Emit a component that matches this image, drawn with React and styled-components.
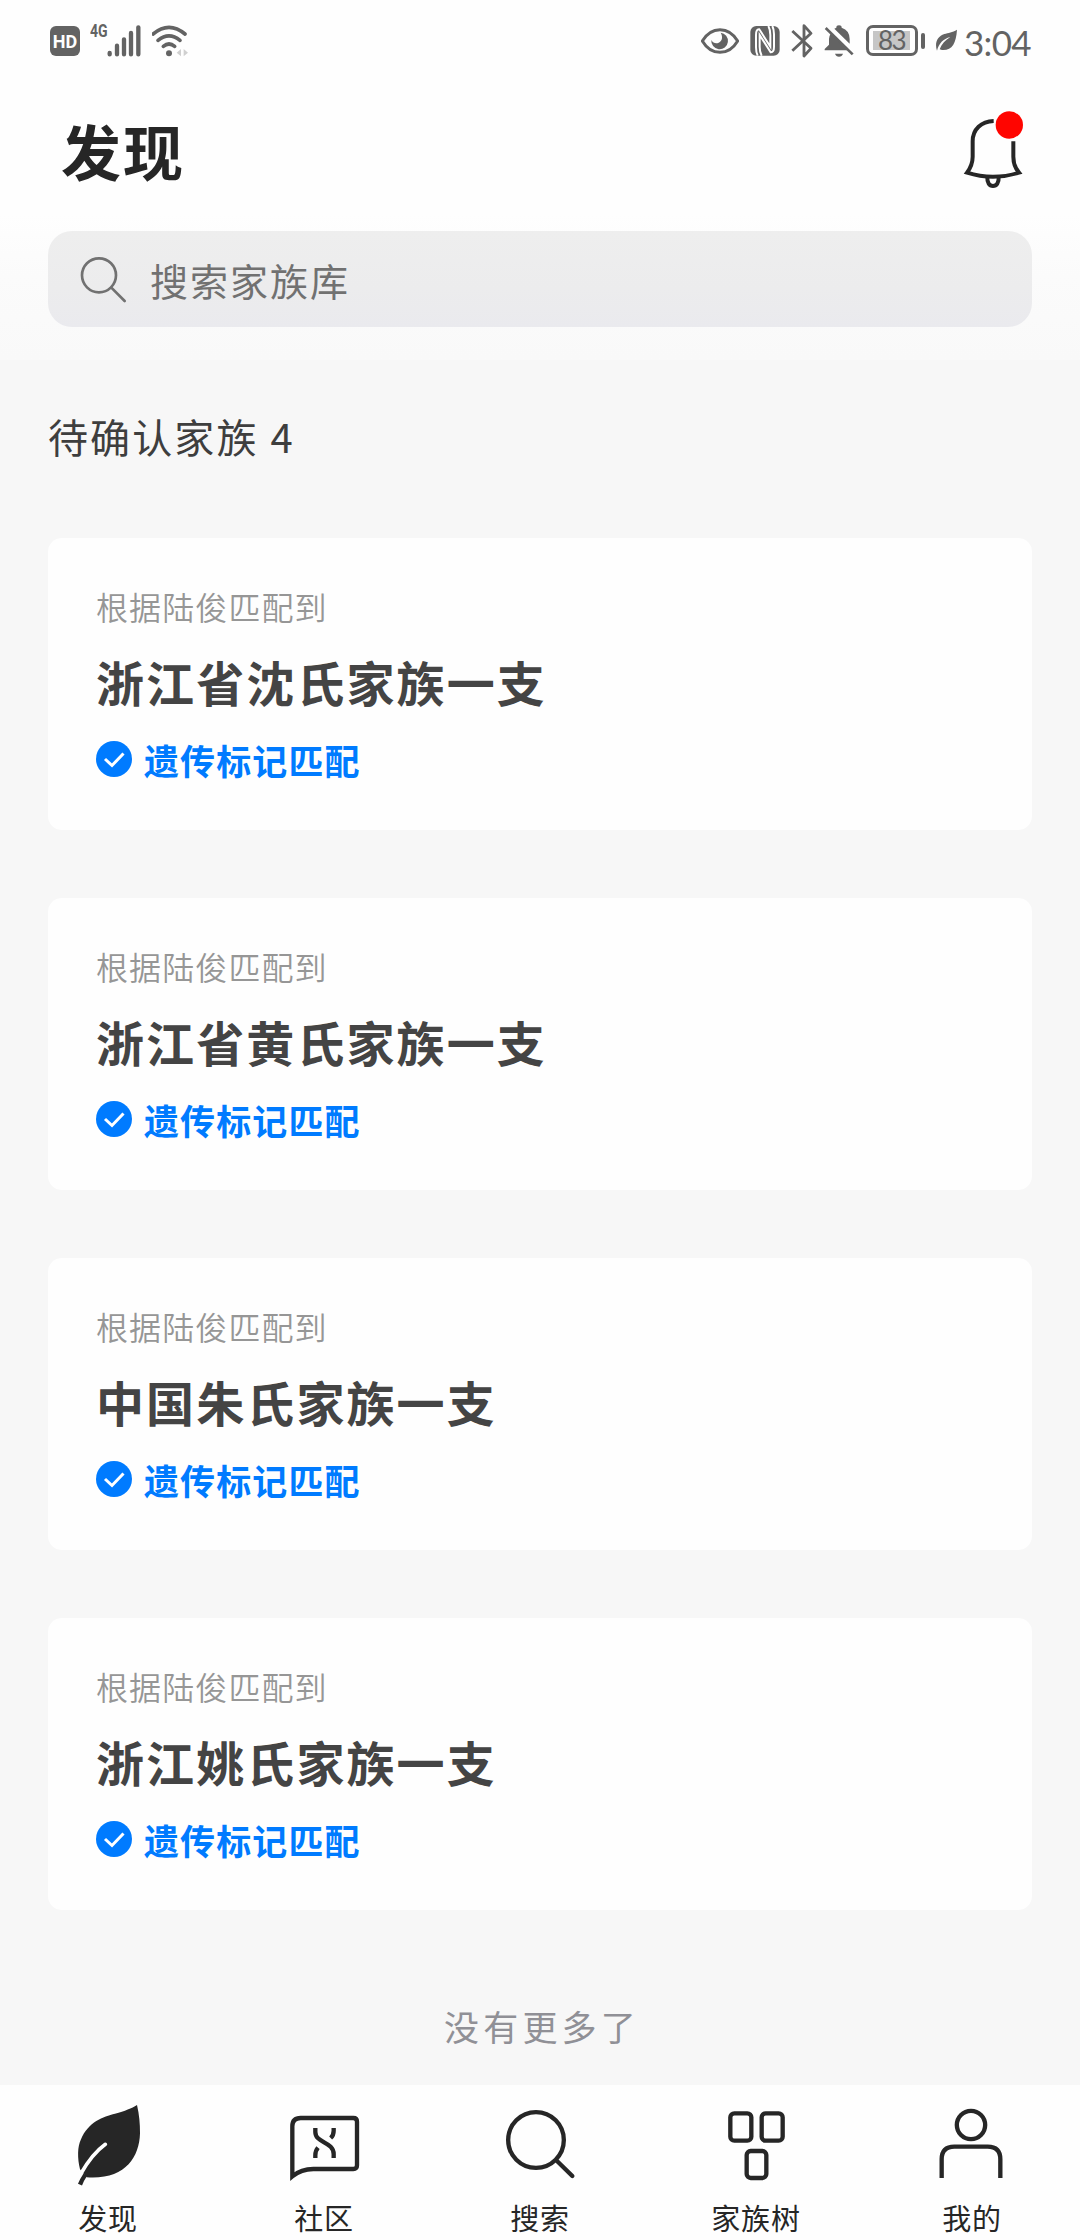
import React from 'react';
import styled, { createGlobalStyle } from 'styled-components';

const families = [
  { id: 1, source: '陆俊', name: '浙江省沈氏家族一支' },
  { id: 2, source: '陆俊', name: '浙江省黄氏家族一支' },
  { id: 3, source: '陆俊', name: '中国朱氏家族一支' },
  { id: 4, source: '陆俊', name: '浙江姚氏家族一支' },
];

const tabs = [
  { label: '发现', Icon: LeafIcon },
  { label: '社区', Icon: CommunityIcon },
  { label: '搜索', Icon: SearchTabIcon },
  { label: '家族树', Icon: TreeIcon },
  { label: '我的', Icon: ProfileIcon },
];

function App() {
  return (
    <>
      <GlobalStyle />
      <Page>
        <StatusBar />
        <Header>
          <TitleRow>
            <h1>发现</h1>
            <BellIcon />
          </TitleRow>
          <SearchBox>
            <SearchIcon />
            <span>搜索家族库</span>
          </SearchBox>
        </Header>
        <Content>
          <SectionTitle>待确认家族 {families.length}</SectionTitle>
          <CardList>
            {families.map((family) => (
              <FamilyCard key={family.id} {...family} />
            ))}
          </CardList>
          <EndText>没有更多了</EndText>
        </Content>
        <TabBar>
          {tabs.map(({ label, Icon }) => (
            <Tab key={label}>
              <Icon />
              <span>{label}</span>
            </Tab>
          ))}
        </TabBar>
      </Page>
    </>
  );
}

function FamilyCard({ source, name }) {
  return (
    <Card>
      <CardLabel>根据{source}匹配到</CardLabel>
      <CardName>{name}</CardName>
      <Match>
        <CheckIcon />
        <span>遗传标记匹配</span>
      </Match>
    </Card>
  );
}

function StatusBar() {
  return (
    <StatusBarStyled>
      <StatusGroup>
        <HdBadge>HD</HdBadge>
        <Network>4G</Network>
        <SignalIcon />
        <WifiIcon />
      </StatusGroup>
      <StatusGroup>
        <EyeIcon />
        <NfcIcon />
        <BluetoothIcon />
        <MutedIcon />
        <Battery>
          <BatteryBody>
            <span>83</span>
          </BatteryBody>
          <BatteryTip />
        </Battery>
        <SaverIcon />
        <Time>3:04</Time>
      </StatusGroup>
    </StatusBarStyled>
  );
}

/* status bar icons */

function SignalIcon() {
  return (
    <svg width="34" height="32" viewBox="231 42 102 96">
      <g stroke="#636363" strokeWidth="13" strokeLinecap="round">
        <path d="M239 126v4M261 104v26M282 85v45M303 66v64M325 49v81" />
      </g>
    </svg>
  );
}

function WifiIcon() {
  return (
    <svg width="38" height="32" viewBox="363 42 114 96">
      <g fill="none" stroke="#636363" strokeWidth="11" strokeLinecap="round">
        <path d="M366 69Q414 29 462 69" />
        <path d="M381 88Q414 61 447 88" />
        <path d="M397 106Q414 92 431 106" />
      </g>
      <circle cx="414" cy="127" r="9" fill="#636363" />
      <path d="M450 114v22l-13-11zM458 114v22l13-11z" fill="#d0d0d0" />
    </svg>
  );
}

function EyeIcon() {
  return (
    <svg width="38" height="32" viewBox="63 42 114 96">
      <path
        d="M67 90C80 68 98 56 120 56s40 12 53 34c-13 22-31 34-53 34s-40-12-53-34z"
        fill="none"
        stroke="#636363"
        strokeWidth="9"
      />
      <path
        d="M122 65a25 25 0 1 1-28 22c5 9 14 12 22 8 11-5 13-18 6-30z"
        fill="#636363"
      />
    </svg>
  );
}

function NfcIcon() {
  return (
    <svg width="30" height="32" viewBox="212 42 90 96">
      <rect x="213" y="45" width="88" height="89" rx="18" fill="#636363" />
      <path
        d="M235 134q-5-10-5-25V72q0-18 10-17l33 52V72q0-16-6-27M279 45q5 10 5 25v37q0 18-10 17l-33-52v35q0 16 6 27"
        fill="none"
        stroke="#fff"
        strokeWidth="6"
      />
    </svg>
  );
}

function BluetoothIcon() {
  return (
    <svg width="22" height="36" viewBox="333 36 66 108">
      <path
        d="M337 60l56 52-21 23V44l21 23-56 52"
        fill="none"
        stroke="#636363"
        strokeWidth="8.5"
        strokeLinejoin="round"
      />
    </svg>
  );
}

function MutedIcon() {
  return (
    <svg width="30" height="34" viewBox="433 39 90 102">
      <path
        d="M453 68l53 50H435v-4l13-13V84q0-9 5-16zM464 53l6-3q0-7 8-7t8 7q24 8 24 34v14z"
        fill="#636363"
      />
      <path d="M438 51l81 79" stroke="#636363" strokeWidth="8" />
      <path d="M466 128h24q-3 9-12 9t-12-9z" fill="#636363" />
    </svg>
  );
}

function SaverIcon() {
  return (
    <svg width="22" height="24" viewBox="763 57 66 72">
      <path
        d="M829 59c-3 42-15 63-45 61l-7-2c6-17 17-28 32-37-22 6-34 19-40 41-8-24 1-43 22-50 12-4 24-4 38-13z"
        fill="#636363"
      />
    </svg>
  );
}

/* header icons */

function BellIcon() {
  return (
    <svg width="68" height="82" viewBox="120 55 204 246">
      <g fill="none" stroke="#262626" strokeWidth="12">
        <path d="M221 91C184 92 158 116 158 152v46c0 17-6 33-17 48 51 16 105 16 156 0-12-14-17-30-17-48v-46" />
        <path d="M202 259c-1 17 6 27 17 27s18-10 17-27" />
      </g>
      <circle cx="268" cy="103" r="41" fill="#ff0500" />
    </svg>
  );
}

function SearchIcon() {
  return (
    <svg width="48" height="48" viewBox="120 467 144 144">
      <g fill="none" stroke="#717171" strokeWidth="8" strokeLinecap="round">
        <circle cx="177" cy="528" r="51" />
        <path d="M214 565l40 40" />
      </g>
    </svg>
  );
}

function CheckIcon() {
  return (
    <svg width="36" height="36" viewBox="0 0 36 36">
      <circle cx="18" cy="18" r="18" fill="#007bff" />
      <path d="M9 18l7 6.5L27.5 12.5" fill="none" stroke="#fff" strokeWidth="3" />
    </svg>
  );
}

/* tab bar icons */

function LeafIcon() {
  return (
    <svg width="72" height="84" viewBox="96 60 216 252" overflow="visible">
      <path
        d="M291 75c7 30 9 55 9 85-2 75-47 140-160 132l-20-24c-8-33-8-68 3-90 22-53 67-68 102-77 30-8 50-16 66-26z"
        fill="#262626"
      />
      <path
        d="M196 193Q157 221 122 282"
        fill="none"
        stroke="#fff"
        strokeWidth="11"
        strokeLinecap="round"
      />
      <path d="M120 314q6-15 16-30" fill="none" stroke="#262626" strokeWidth="13" />
    </svg>
  );
}

function CommunityIcon() {
  return (
    <svg width="72" height="84" viewBox="744 60 216 252">
      <g fill="none" stroke="#262626" strokeWidth="13">
        <path d="M757 289V139q0-25 25-25h158q11 0 11 11v131q0 11-11 11H820q-36 0-63 22z" />
        <path d="M826 144v12c0 34 55 28 55 66v12M881 144v8q0 14-9 22M826 234v-8q0-14 8-23" />
      </g>
    </svg>
  );
}

function SearchTabIcon() {
  return (
    <svg width="72" height="84" viewBox="252 360 216 252">
      <g fill="none" stroke="#262626" strokeWidth="13" strokeLinecap="round">
        <circle cx="348" cy="480" r="83.5" />
        <path d="M411 543l46 45" />
      </g>
    </svg>
  );
}

function TreeIcon() {
  return (
    <svg width="72" height="84" viewBox="120 60 216 252">
      <g fill="none" stroke="#262626" strokeWidth="13">
        <rect x="151" y="100" width="63" height="82" rx="12" />
        <rect x="245" y="100" width="63" height="82" rx="12" />
        <rect x="200" y="213" width="59" height="81" rx="12" />
      </g>
    </svg>
  );
}

function ProfileIcon() {
  return (
    <svg width="72" height="84" viewBox="768 60 216 252">
      <g fill="none" stroke="#262626" strokeWidth="13">
        <circle cx="873" cy="135" r="42.5" />
        <path d="M785 294v-56q0-38 38-38h100q38 0 38 38v56" />
      </g>
    </svg>
  );
}

const GlobalStyle = createGlobalStyle`
  * {
    box-sizing: border-box;
  }
  body {
    margin: 0;
    font-family: 'Noto Sans CJK SC', sans-serif;
  }
  h1, h2, h3, p {
    margin: 0;
  }
  svg {
    display: block;
    flex-shrink: 0;
  }
`;

const Page = styled.div`
  display: flex;
  flex-direction: column;
  width: 1080px;
  height: 2240px;
  overflow: hidden;
  background: #f7f7f7;
`;

const StatusBarStyled = styled.div`
  display: flex;
  justify-content: space-between;
  height: 80px;
  padding: 0 50px;
  background: #fefefe;
  color: #636363;
`;

const StatusGroup = styled.div`
  display: flex;
  align-items: center;
  height: 81px;
  > svg + svg {
    margin-left: 11px;
  }
`;

const HdBadge = styled.div`
  width: 30px;
  height: 30px;
  border-radius: 6px;
  background: #636363;
  color: #fff;
  font: 700 18px/31px Roboto, sans-serif;
  text-align: center;
`;

const Network = styled.span`
  width: 17px;
  margin: 0 0 19px 10px;
  font: 700 18px/18px Roboto, sans-serif;
  transform: scaleX(0.78);
  transform-origin: left;
`;

const Battery = styled.div`
  display: flex;
  align-items: center;
  gap: 3px;
  margin: 0 10px 0 12px;
`;

const BatteryBody = styled.div`
  width: 52px;
  height: 31px;
  padding: 3px;
  border: 3px solid #636363;
  border-radius: 7px;
  span {
    display: block;
    width: 37px;
    height: 19px;
    margin-left: 1px;
    background: #c6c6c6;
    font: 400 26px/19px Lato, sans-serif;
    letter-spacing: -1.5px;
    text-align: center;
  }
`;

const BatteryTip = styled.div`
  width: 4px;
  height: 16px;
  border-radius: 2px;
  background: #636363;
`;

const Time = styled.span`
  width: 66px;
  margin-left: 7px;
  padding-top: 3px;
  font: 400 35px/40px Lato, sans-serif;
  letter-spacing: -0.7px;
`;

const Header = styled.header`
  height: 280px;
  padding: 0 48px;
  background: linear-gradient(#fefefe 0%, #fefefe 48%, #fbfbfb 70%, #f9f9f9 100%);
`;

const TitleRow = styled.div`
  display: flex;
  align-items: center;
  justify-content: space-between;
  height: 151px;
  padding: 0 4px 12px 13px;
  h1 {
    color: #262626;
    font-size: 60px;
    font-weight: 700;
    line-height: 80px;
    letter-spacing: 2px;
  }
`;

const SearchBox = styled.div`
  display: flex;
  align-items: center;
  gap: 22px;
  height: 96px;
  padding: 0 32px;
  border-radius: 24px;
  background: linear-gradient(#eeeeee, #ececed 60%, #eaeaee);
  color: #717171;
  font-size: 38px;
  letter-spacing: 2px;
`;

const Content = styled.main`
  flex: 1;
  padding: 0 48px;
`;

const SectionTitle = styled.h2`
  padding-top: 46px;
  height: 178px;
  color: #3e3e3e;
  font-size: 40px;
  font-weight: 400;
  line-height: 60px;
  letter-spacing: 2.1px;
  word-spacing: 1px;
`;

const CardList = styled.div`
  display: flex;
  flex-direction: column;
  gap: 68px;
`;

const Card = styled.article`
  height: 292px;
  padding: 44px 48px;
  border-radius: 14px;
  background: #fefefe;
`;

const CardLabel = styled.p`
  color: #969696;
  font-size: 32px;
  font-weight: 350;
  line-height: 48px;
  letter-spacing: 1.1px;
`;

const CardName = styled.h3`
  margin-top: 15px;
  color: #444;
  font-size: 48px;
  font-weight: 700;
  line-height: 72px;
  letter-spacing: 2.1px;
`;

const Match = styled.div`
  display: flex;
  align-items: center;
  gap: 12px;
  margin-top: 15px;
  color: #007bff;
  font-size: 35px;
  font-weight: 700;
  line-height: 52px;
  letter-spacing: 1.1px;
  span {
    padding-top: 2px;
  }
`;

const EndText = styled.p`
  padding: 90px 0 0 4px;
  color: #909096;
  font-size: 35px;
  line-height: 52px;
  letter-spacing: 4.2px;
  text-align: center;
`;

const TabBar = styled.nav`
  display: grid;
  grid-template-columns: repeat(5, 1fr);
  height: 155px;
  background: #fefefe;
`;

const Tab = styled.div`
  display: flex;
  flex-direction: column;
  align-items: center;
  padding-top: 15px;
  span {
    margin-top: 13px;
    color: #262626;
    font-size: 29px;
    line-height: 40px;
    letter-spacing: 0.8px;
  }
`;

export default App;
